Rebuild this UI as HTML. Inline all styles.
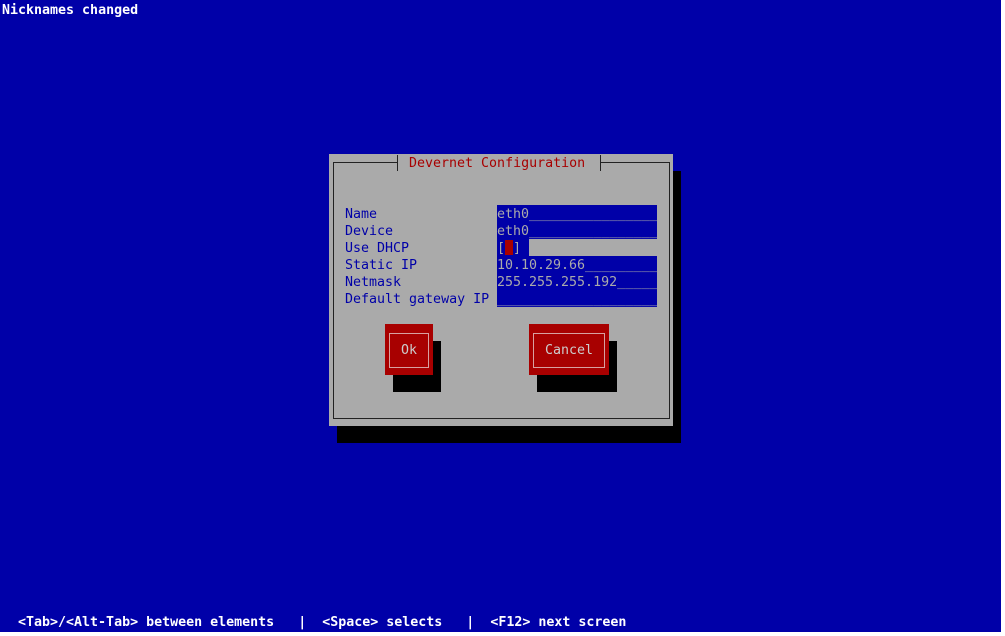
<!DOCTYPE html>
<html><head><style>
*{margin:0;padding:0}
body{width:1005px;height:636px;background:#0000a8;position:relative;overflow:hidden;font-family:"DejaVu Sans Mono","Liberation Mono",monospace;font-size:13.3px;}
.t{position:absolute;white-space:pre;line-height:17px;height:17px;margin-top:1px}
.b{position:absolute}
</style></head><body>
<div class="b" style="left:1001px;top:0;width:4px;height:636px;background:#fff"></div>
<div class="b" style="left:0;top:632px;width:1005px;height:4px;background:#fff"></div>
<div class="t" style="left:2px;top:1px;color:#fff;font-weight:bold">Nicknames changed</div>
<div class="b" style="left:337px;top:171px;width:344px;height:272px;background:#000"></div>
<div class="b" style="left:329px;top:154px;width:344px;height:272px;background:#aaa"></div>
<div class="b" style="left:333px;top:162px;width:335px;height:255px;border:1px solid #222"></div>
<div class="b" style="left:397px;top:155px;width:202px;height:16px;background:#aaa;border-left:1px solid #222;border-right:1px solid #222"></div>
<div class="t" style="left:409px;top:154px;color:#a80000">Devernet Configuration</div>
<div class="t" style="left:345px;top:205px;color:#0000a8">Name</div>
<div class="t" style="left:345px;top:222px;color:#0000a8">Device</div>
<div class="t" style="left:345px;top:239px;color:#0000a8">Use DHCP</div>
<div class="t" style="left:345px;top:256px;color:#0000a8">Static IP</div>
<div class="t" style="left:345px;top:273px;color:#0000a8">Netmask</div>
<div class="t" style="left:345px;top:290px;color:#0000a8">Default gateway IP</div>
<div class="b" style="left:497px;top:205px;width:160px;height:17px;background:#0000a8"></div>
<div class="b" style="left:497px;top:222px;width:160px;height:17px;background:#0000a8"></div>
<div class="b" style="left:497px;top:256px;width:160px;height:17px;background:#0000a8"></div>
<div class="b" style="left:497px;top:273px;width:160px;height:17px;background:#0000a8"></div>
<div class="b" style="left:497px;top:290px;width:160px;height:17px;background:#0000a8"></div>
<div class="t" style="left:497px;top:205px;color:#aaa">eth0________________</div>
<div class="t" style="left:497px;top:222px;color:#aaa">eth0________________</div>
<div class="t" style="left:497px;top:256px;color:#aaa">10.10.29.66_________</div>
<div class="t" style="left:497px;top:273px;color:#aaa">255.255.255.192_____</div>
<div class="t" style="left:497px;top:290px;color:#aaa">____________________</div>
<div class="b" style="left:497px;top:239px;width:32px;height:17px;background:#0000a8"></div>
<div class="b" style="left:505px;top:240px;width:8px;height:15px;background:#a80000"></div>
<div class="t" style="left:497px;top:239px;color:#aaa">[ ]</div>
<div class="b" style="left:393px;top:341px;width:48px;height:51px;background:#000"></div>
<div class="b" style="left:385px;top:324px;width:48px;height:51px;background:#a80000"></div>
<div class="b" style="left:389px;top:333px;width:38px;height:33px;border:1px solid #d8a0a0"></div>
<div class="t" style="left:401px;top:341px;color:#ccc">Ok</div>
<div class="b" style="left:537px;top:341px;width:80px;height:51px;background:#000"></div>
<div class="b" style="left:529px;top:324px;width:80px;height:51px;background:#a80000"></div>
<div class="b" style="left:533px;top:333px;width:70px;height:33px;border:1px solid #d8a0a0"></div>
<div class="t" style="left:545px;top:341px;color:#ccc">Cancel</div>
<div class="t" style="left:18px;top:613px;color:#fff;font-weight:bold">&lt;Tab&gt;/&lt;Alt-Tab&gt; between elements   |  &lt;Space&gt; selects   |  &lt;F12&gt; next screen</div>
</body></html>
